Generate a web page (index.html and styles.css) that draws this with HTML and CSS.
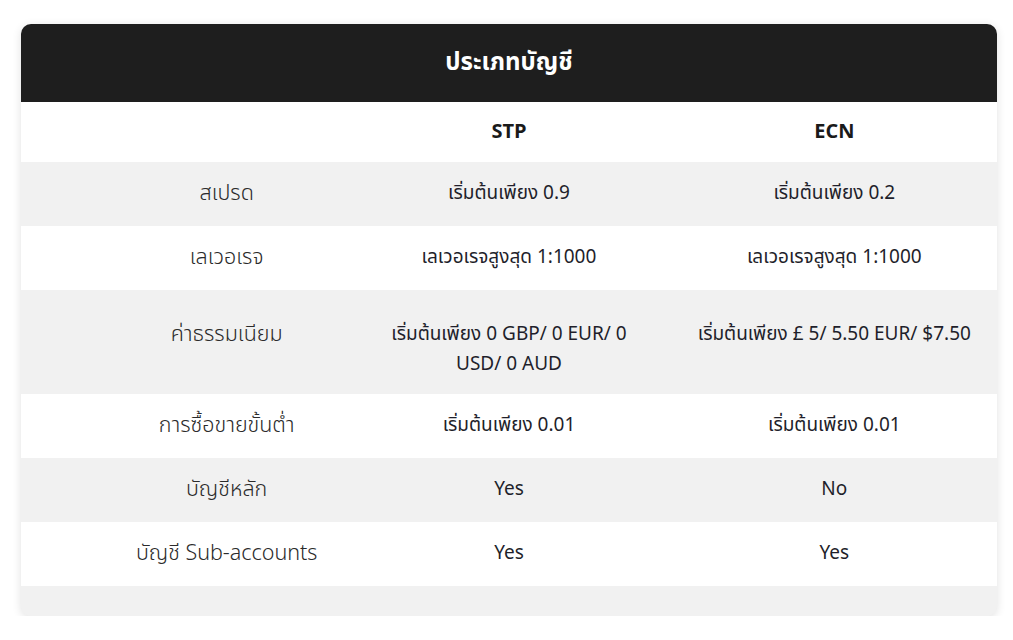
FILE: index.html
```html
<!DOCTYPE html>
<html lang="th">
<head>
<meta charset="utf-8">
<title>ประเภทบัญชี</title>
<link rel="stylesheet" href="styles.css">
</head>
<body>
<div class="page">
  <div class="card">
    <div class="card-title">ประเภทบัญชี</div>
    <table class="accounts">
      <colgroup><col class="c1"><col class="c2"><col class="c3"></colgroup>
      <thead>
        <tr class="head-row"><th class="label"></th><th>STP</th><th>ECN</th></tr>
      </thead>
      <tbody>
        <tr class="alt"><td class="label">สเปรด</td><td>เริ่มต้นเพียง 0.9</td><td>เริ่มต้นเพียง 0.2</td></tr>
        <tr><td class="label">เลเวอเรจ</td><td>เลเวอเรจสูงสุด 1:1000</td><td>เลเวอเรจสูงสุด 1:1000</td></tr>
        <tr class="alt tall"><td class="label">ค่าธรรมเนียม</td><td>เริ่มต้นเพียง 0 GBP/ 0 EUR/ 0 USD/ 0 AUD</td><td>เริ่มต้นเพียง £ 5/ 5.50 EUR/ $7.50</td></tr>
        <tr><td class="label">การซื้อขายขั้นต่ำ</td><td>เริ่มต้นเพียง 0.01</td><td>เริ่มต้นเพียง 0.01</td></tr>
        <tr class="alt"><td class="label">บัญชีหลัก</td><td>Yes</td><td>No</td></tr>
        <tr><td class="label">บัญชี Sub-accounts</td><td>Yes</td><td>Yes</td></tr>
      </tbody>
    </table>
    <div class="card-foot"></div>
  </div>
</div>
</body>
</html>
```
FILE: styles.css
```css
html, body {
  margin: 0;
  padding: 0;
  background: #ffffff;
}
body {
  font-family: "Noto Sans Thai", "Noto Sans", sans-serif;
  color: #1f1f2b;
}
.page {
  padding: 24px 16px 0 21px;
}
.card {
  width: 976px;
  border-radius: 10px;
  overflow: hidden;
  box-shadow: 0 2px 10px rgba(0, 0, 0, 0.12);
  background: #f1f1f1;
}
.card-title {
  background: #1e1e1e;
  color: #ffffff;
  height: 78px;
  display: flex;
  align-items: center;
  justify-content: center;
  font-size: 24px;
  font-weight: 700;
}
.accounts {
  width: 100%;
  border-collapse: collapse;
  table-layout: fixed;
}
.accounts col { width: 33.333%; }
.accounts th, .accounts td {
  text-align: center;
  vertical-align: middle;
  padding: 0 24px;
  font-size: 19px;
  line-height: 30px;
}
.accounts th {
  height: 60px;
  font-weight: 700;
  font-size: 20px;
  color: #1a1a1a;
}
.accounts td {
  height: 64px;
  background: #ffffff;
}
.accounts tr.alt td {
  background: #f1f1f1;
}
.accounts tr.tall td {
  height: 104px;
  box-sizing: border-box;
  vertical-align: top;
  padding-top: 30px;
}
.head-row th { background: #ffffff; }
.accounts .label {
  padding-left: 106px;
  padding-right: 20px;
  font-weight: 300;
  font-size: 21.5px;
  color: #2b2b2b;
}
.card-foot {
  height: 30px;
  background: #f1f1f1;
}
```
